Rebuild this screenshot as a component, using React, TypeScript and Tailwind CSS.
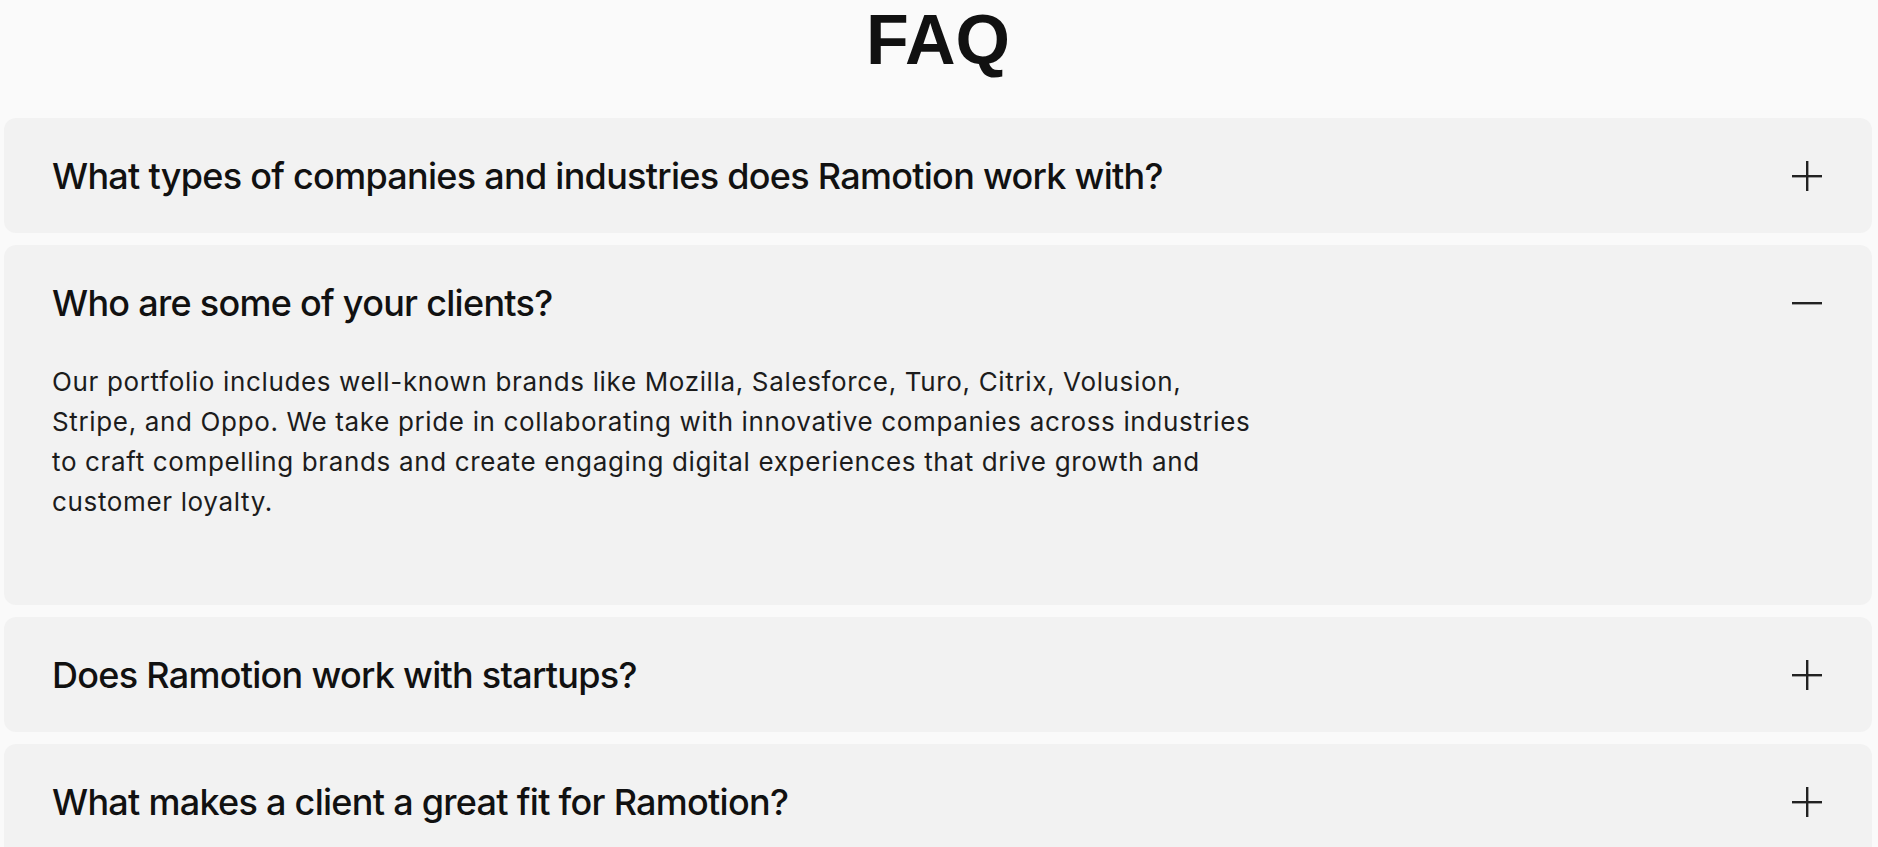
import React from "react";

const questions = [
  "What types of companies and industries does Ramotion work with?",
  "Who are some of your clients?",
  "Does Ramotion work with startups?",
  "What makes a client a great fit for Ramotion?",
];

function PlusIcon({ open }: { open: boolean }) {
  return (
    <svg width="30" height="30" viewBox="0 0 30 30" className="mr-[2px] shrink-0" aria-hidden>
      <rect x="0" y="14" width="30" height="2.4" fill="#222" />
      {!open && <rect x="14" y="0" width="2.4" height="30" fill="#222" />}
    </svg>
  );
}

export default function App() {
  return (
    <div className="min-h-screen bg-[#fafafa] pl-1 pr-[6px]" style={{ fontFamily: "Inter, 'Noto Sans', sans-serif" }}>
      <h2 className="text-center text-[70px] font-bold leading-[80px] text-[#111] font-['Liberation_Sans',Arial,sans-serif]">
        FAQ
      </h2>
      <div className="mt-[38px] flex flex-col gap-3">
        {questions.map((q, i) => {
          const open = i === 1;
          return (
            <div key={q} className="rounded-xl bg-[#f2f2f2]">
              <div className="flex h-[115px] items-center justify-between px-12">
                <h3 className="text-[36px] font-medium tracking-[-0.02em] text-[#111]">{q}</h3>
                <PlusIcon open={open} />
              </div>
              {open && (
                <div className="px-12 pb-[83px] pt-[2px]">
                  <p className="text-[26px] leading-[40px] tracking-[0.025em] text-[#1c1c1c]">
                    Our portfolio includes well-known brands like Mozilla, Salesforce, Turo, Citrix, Volusion,
                    <br />
                    Stripe, and Oppo. We take pride in collaborating with innovative companies across industries
                    <br />
                    to craft compelling brands and create engaging digital experiences that drive growth and
                    <br />
                    customer loyalty.
                  </p>
                </div>
              )}
            </div>
          );
        })}
      </div>
    </div>
  );
}
